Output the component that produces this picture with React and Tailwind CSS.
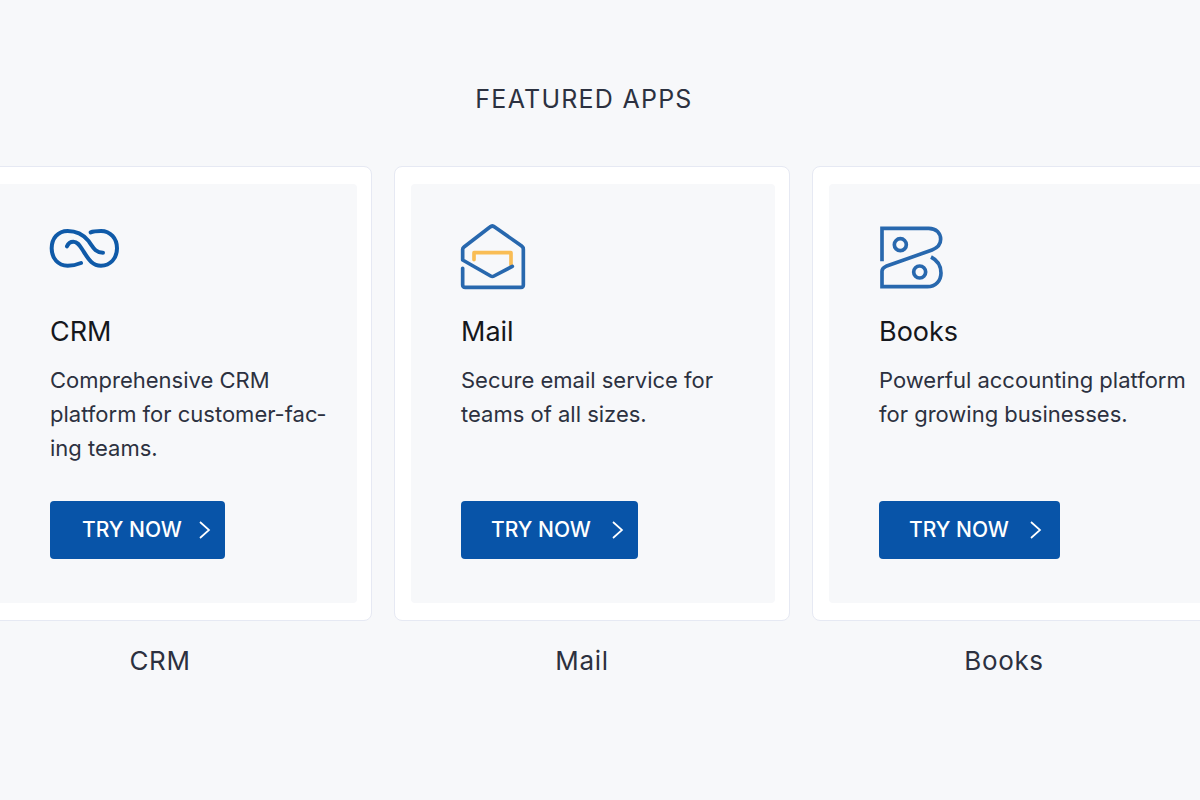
import React from "react";

const CrmIcon = () => (
  <svg className="overflow-visible" width="70" height="68" viewBox="31 21 210 204" fill="none" stroke="#0f5aa8" strokeWidth="12" strokeLinecap="round" aria-hidden="true">
    <path d="M124 144C112 149 98 152 84 152C55 152 36 130 36 100C36 70 55 48 84 48C112 48 130 58 146 77C160 96 166 113 190 113" />
    <path d="M82 94C86 84 92 80 101 80C116 80 121 94 132 110C148 136 160 152 184 152C212 152 232 130 232 100C232 70 212 48 184 48C172 48 162 48 153 52" />
  </svg>
);

const MailIcon = () => (
  <svg className="overflow-visible" width="66" height="68" viewBox="33 20 198 204" fill="none" strokeWidth="11" strokeLinecap="round" strokeLinejoin="round" aria-hidden="true">
    <path d="M72 133V112H183V148" stroke="#f9bd55" />
    <path d="M187 153L132 182Q127 185 122 182L38 134V102Q38 98 42 95L120 35Q127 29 134 35L215 92Q220 96 220 102V209Q220 216 213 216H46Q38 216 38 209V159" stroke="#2868ae" />
  </svg>
);

const BooksIcon = () => (
  <svg className="overflow-visible" width="66" height="68" viewBox="35 22 198 204" fill="none" stroke="#2868ae" strokeWidth="11" aria-hidden="true">
    <path d="M44 140V41H184C207 41 220 55 220 74C220 91 210 100 194 106L56 155Q44 160 44 170V216H180C205 216 221 198 221 175C221 151 211 137 191 127" />
    <circle cx="99" cy="90" r="18" />
    <circle cx="157" cy="172" r="18" />
  </svg>
);

const apps = [
  {
    name: "CRM",
    description: "Comprehensive CRM platform for customer-fac\u00ading teams.",
    icon: CrmIcon,
    frame: "pr-3.5",
    panel: "pl-[57px] pr-6",
    button: "pl-8 pr-3",
    arrow: "ml-4",
    caption: "pr-7",
  },
  {
    name: "Mail",
    description: "Secure email service for teams of all sizes.",
    icon: MailIcon,
    frame: "pr-3.5",
    panel: "pl-[50px] pr-12",
    button: "pl-[30px] pr-3",
    arrow: "ml-5",
    caption: "pr-5",
  },
  {
    name: "Books",
    description: "Powerful accounting platform for growing businesses.",
    icon: BooksIcon,
    frame: "pr-1",
    panel: "pl-[50px] pr-0",
    button: "pl-[30px] pr-4",
    arrow: "ml-5",
    caption: "pr-3",
  },
];

const AppCard = ({ app }) => {
  const Icon = app.icon;

  return (
    <article className="flex flex-col">
      <div className={`flex-1 rounded-lg border border-[#e6e9f3] bg-white py-[17px] pl-4 ${app.frame}`}>
        <div className={`flex h-full flex-col items-start rounded bg-[#f7f8fa] pt-[38px] pb-11 ${app.panel}`}>
          <Icon />
          <h3 className="mt-6 text-[27px] leading-9 text-[#15171c]">{app.name}</h3>
          <p className="mt-[13px] mb-9 text-[22px] leading-[34px] text-[#2c3140]">{app.description}</p>
          <button
            type="button"
            className={`mt-auto flex h-[58px] items-center rounded bg-[#0854a8] text-[21px] font-medium whitespace-nowrap text-white hover:bg-[#06478f] ${app.button}`}
          >
            TRY NOW
            <svg className={app.arrow} width="15" height="20" viewBox="0 0 15 20" fill="none" stroke="currentColor" strokeWidth="1.7" aria-hidden="true">
              <path d="M2 2L11 10L2 18" />
            </svg>
          </button>
        </div>
      </div>
      <p className={`mt-5 text-center text-[26px] leading-10 tracking-wide text-[#2c3140] ${app.caption}`}>{app.name}</p>
    </article>
  );
};

const App = () => {
  return (
    <main className="min-h-screen overflow-hidden bg-[#f7f8fa] pt-20 font-[Inter,sans-serif]">
      <h2 className="pr-8 text-center text-[25px] leading-[38px] tracking-wider text-[#2c3140]">FEATURED APPS</h2>
      <section className="mt-12 -mr-2 -ml-6 grid grid-cols-3 gap-[22px]">
        {apps.map((app) => (
          <AppCard key={app.name} app={app} />
        ))}
      </section>
    </main>
  );
};

export default App;
